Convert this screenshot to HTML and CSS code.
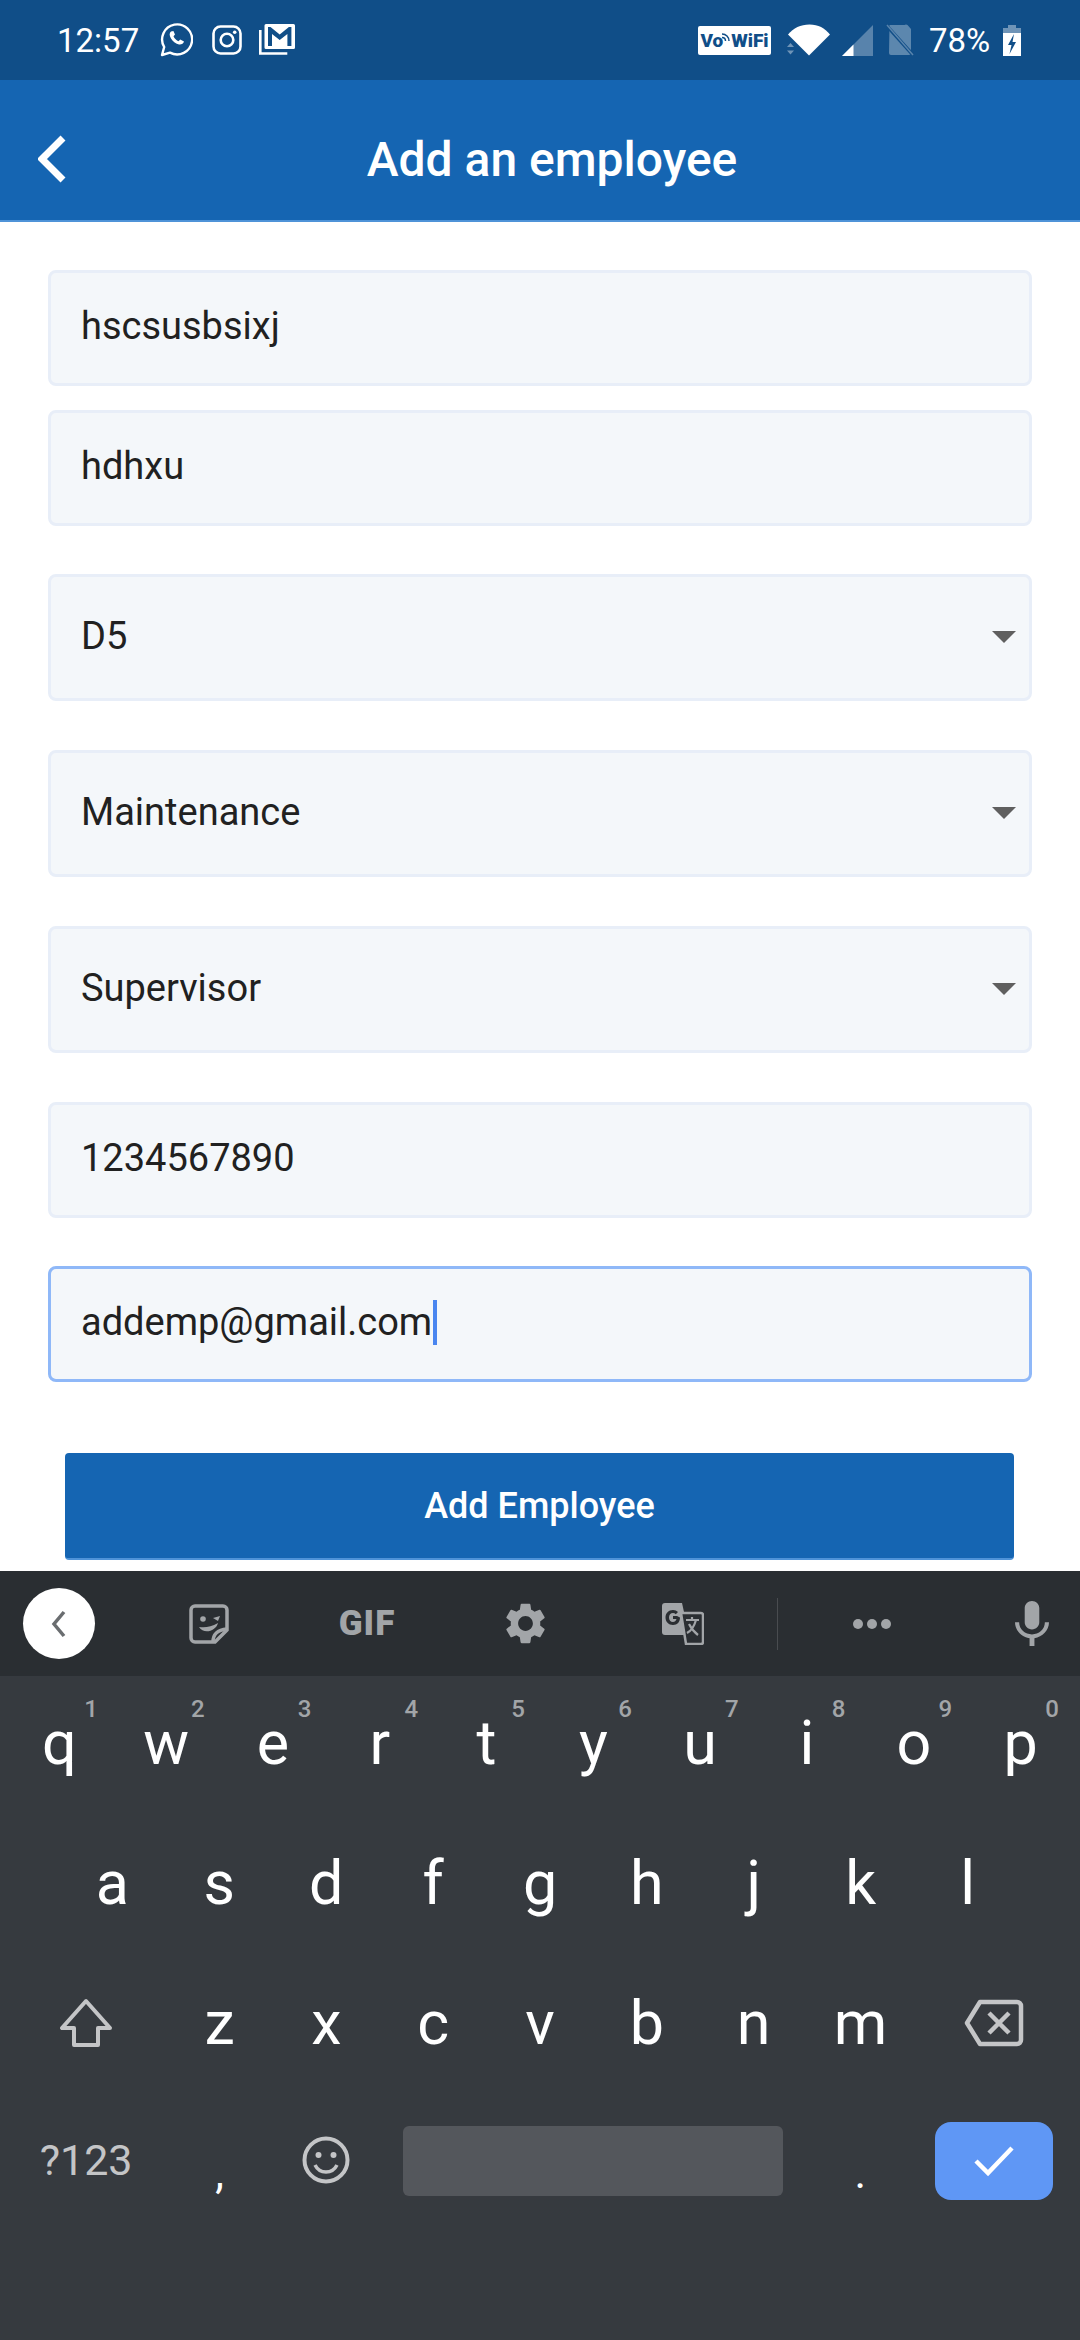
FILE: index.html
```html
<!DOCTYPE html>
<html>
<head>
    <meta charset="UTF-8">
    <title>Add an employee</title>
    <link rel="stylesheet" href="styles.css">
</head>
<body>
<div class="statusbar">
    <span class="time">12:57</span>
    <svg class="ic-wa" viewBox="0 0 33 35"><path d="M2 33l2.200-8A15 15 0 1 1 10 30.600z" fill="none" stroke="#fff" stroke-width="2.400" stroke-linejoin="round"/><path d="M11 9.500c-1.800 1.500-1.800 4 0 7 2 3.300 5 5.500 8 6 2.500.3 4.500-1 5-3l-3.800-2-1.700 1.700c-2-.7-4-2.700-5-5l1.500-1.700-1.600-3.500z" fill="#fff"/></svg>
    <svg class="ic-ig" viewBox="0 0 30 30"><rect x="1.500" y="1.500" width="27" height="27" rx="7" fill="none" stroke="#fff" stroke-width="2.600"/><circle cx="15" cy="15" r="6.300" fill="none" stroke="#fff" stroke-width="2.600"/><circle cx="22.700" cy="7.300" r="1.800" fill="#fff"/></svg>
    <svg class="ic-gm" viewBox="0 0 36 31"><path d="M1.300 6v23.500h27" fill="none" stroke="#fff" stroke-width="2.600"/><path d="M7 0h27.500a1.500 1.500 0 0 1 1.500 1.500v22a1.500 1.500 0 0 1-1.500 1.500H7a1.500 1.500 0 0 1-1.500-1.500v-22A1.500 1.500 0 0 1 7 0z" fill="#fff"/><path d="M9 3v19h4V10l7.700 6 7.700-6v12h4V3h-2.500l-9.200 7.500L11.500 3z" fill="#104e88"/></svg>
    <div class="status-right">
        <span class="vowifi">Vo<svg class="ic-arcs" viewBox="0 0 9 10"><path d="M0 3c4 0 7 3 7 7M0 6.500c2 0 3.500 1.500 3.500 3.500" fill="none" stroke="#104e88" stroke-width="1.500"/></svg>WiFi</span>
        <svg class="ic-wifi" viewBox="0 0 44 32"><path d="M1 10.500C6.500 4 13.500.5 22.500.5S37.500 4 43 10.500L22 31.500z" fill="#fff"/><path d="M0 23l3.500-4 3.500 4zM0 26.500l3.500 4 3.500-4z" fill="#fff" opacity=".4"/></svg>
        <svg class="ic-signal" viewBox="0 0 31 31"><path d="M31 0v31H0z" fill="#fff" opacity=".3"/><path d="M11.500 19.500V31H0z" fill="#fff"/></svg>
        <svg class="ic-sim" viewBox="0 0 28 32"><path d="M3.500 1h15a3 3 0 0 1 3 0l3.500 4v24a2 2 0 0 1-2 2H5a2 2 0 0 1-2-2z" fill="#fff" opacity=".32"/><path d="M0 1l27 30" stroke="#104e88" stroke-width="3.500"/><path d="M1 1l26 30" stroke="#fff" stroke-width="1.500" opacity=".3"/></svg>
        <span class="pct">78%</span>
        <svg class="ic-batt" viewBox="0 0 18 31"><path d="M5 0h8v3h5v28H0V3h5z" fill="#fff" opacity=".4"/><path d="M0 8h18v23H0z" fill="#fff"/><path d="M11 9l-6 11h3.500L6.500 29l6.500-12H9.500z" fill="#104e88"/></svg>
    </div>
</div>

<div class="header">
    <svg class="back" viewBox="0 0 28 48"><path d="M25 3L4 24l21 21" fill="none" stroke="#fff" stroke-width="7"/></svg>
    <div class="title">Add an employee</div>
</div>

<div class="form">
    <div class="field first"><span>hscsusbsixj</span></div>
    <div class="field tight"><span>hdhxu</span></div>
    <div class="field select gap48"><span>D5</span><b class="arrow"></b></div>
    <div class="field select"><span>Maintenance</span><b class="arrow"></b></div>
    <div class="field select"><span>Supervisor</span><b class="arrow"></b></div>
    <div class="field"><span>1234567890</span></div>
    <div class="field focus gap48"><span>addemp@gmail.com</span><i class="caret"></i></div>
    <div class="btn">Add Employee</div>
</div>

<div class="keyboard">
    <div class="toolbar">
        <div class="tb-back"><svg viewBox="0 0 16 28" width="16" height="28"><path d="M13 2L3 14l10 12" fill="none" stroke="#6a6d70" stroke-width="3.500"/></svg></div>
        <div class="tb-item">
            <svg class="ic-sticker" viewBox="0 0 40 40"><path d="M6 2h28a4 4 0 0 1 4 4v20L26 38H6a4 4 0 0 1-4-4V6a4 4 0 0 1 4-4z" fill="none" stroke="#a2a5a8" stroke-width="3.500"/><path d="M24 38c0-8 4-12 14-13" fill="none" stroke="#a2a5a8" stroke-width="3.500"/><circle cx="14" cy="15" r="2.800" fill="#a2a5a8"/><path d="M24 14l7-2-2 5z" fill="#a2a5a8"/><path d="M10 23c6 1 12 0 19-4-2 8-14 12-19 4z" fill="#a2a5a8"/></svg>
        </div>
        <div class="tb-item"><span class="gif">GIF</span></div>
        <div class="tb-item">
            <svg class="ic-gear" viewBox="2 2 20 20"><path fill="#a2a5a8" d="M19.140 12.940c.04-.3.06-.61.06-.94 0-.32-.02-.64-.07-.94l2.030-1.580c.18-.14.23-.41.12-.61l-1.920-3.320c-.12-.22-.37-.29-.59-.22l-2.390.96c-.5-.38-1.030-.7-1.620-.94l-.36-2.540c-.04-.24-.24-.41-.48-.41h-3.840c-.24 0-.43.17-.47.41l-.36 2.540c-.59.24-1.130.57-1.620.94l-2.390-.96c-.22-.08-.47 0-.59.22L2.740 8.870c-.12.21-.08.47.12.61l2.030 1.580c-.05.3-.09.63-.09.94s.02.64.07.94l-2.030 1.580c-.18.14-.23.41-.12.61l1.920 3.320c.12.22.37.29.59.22l2.390-.96c.5.38 1.030.7 1.620.94l.36 2.540c.05.24.24.41.48.41h3.840c.24 0 .44-.17.47-.41l.36-2.540c.59-.24 1.130-.56 1.620-.94l2.390.96c.22.08.47 0 .59-.22l1.920-3.320c.12-.22.07-.47-.12-.61l-2.010-1.580zM12 15.600c-1.980 0-3.600-1.620-3.600-3.600s1.620-3.600 3.600-3.600 3.600 1.620 3.600 3.600-1.620 3.600-3.600 3.600z"/></svg>
        </div>
        <div class="tb-item">
            <svg class="ic-translate" viewBox="0 0 42 42"><path d="M3 0h17l2 9v23H3a3 3 0 0 1-3-3V3a3 3 0 0 1 3-3z" fill="#a2a5a8"/><path d="M19 10h20a2 2 0 0 1 2 2v27a2 2 0 0 1-2 2H24l-5-31z" fill="#2a2e32" stroke="#a2a5a8" stroke-width="2.500"/><path d="M15 13h-4v3h3.500c-.5 2-2 3-3.500 3-2.500 0-4-2-4-4.500S8.500 10 11 10c1 0 2 .4 2.800 1.200l2.200-2.200C14.700 7.700 13 7 11 7c-4.500 0-7.500 3.300-7.500 7.500S6.500 22 11 22s7-3 7-7.500z" fill="#2a2e32"/><path d="M24 17h13M30 14v3M34 17c-2 7-5 11-9 13M27 21c2 4 5 8 9 11" fill="none" stroke="#a2a5a8" stroke-width="2.200"/></svg>
        </div>
        <div class="tb-sep"></div>
        <div class="tb-item"><span class="dots"><i></i><i></i><i></i></span></div>
        <div class="tb-item">
            <svg class="ic-mic" viewBox="5 2 14 19" preserveAspectRatio="none"><path fill="#a2a5a8" d="M12 14c1.660 0 3-1.340 3-3V5c0-1.660-1.340-3-3-3S9 3.340 9 5v6c0 1.660 1.340 3 3 3zm5.300-3c0 3-2.540 5.100-5.300 5.100S6.700 14 6.700 11H5c0 3.410 2.720 6.230 6 6.720V21h2v-3.280c3.280-.48 6-3.300 6-6.720h-1.700z"/></svg>
        </div>
    </div>

    <div class="kb-row">
        <div class="key">q<sup>1</sup></div><div class="key">w<sup>2</sup></div><div class="key">e<sup>3</sup></div><div class="key">r<sup>4</sup></div><div class="key">t<sup>5</sup></div><div class="key">y<sup>6</sup></div><div class="key">u<sup>7</sup></div><div class="key">i<sup>8</sup></div><div class="key">o<sup>9</sup></div><div class="key">p<sup>0</sup></div>
    </div>
    <div class="kb-row row-mid">
        <div class="key">a</div><div class="key">s</div><div class="key">d</div><div class="key">f</div><div class="key">g</div><div class="key">h</div><div class="key">j</div><div class="key">k</div><div class="key">l</div>
    </div>
    <div class="kb-row">
        <div class="key wide">
            <svg class="ic-shift" viewBox="0 0 54 50"><path d="M27 3L3 30h12v17h24V30h12z" fill="none" stroke="#c4c5c7" stroke-width="4" stroke-linejoin="round"/></svg>
        </div>
        <div class="key">z</div><div class="key">x</div><div class="key">c</div><div class="key">v</div><div class="key">b</div><div class="key">n</div><div class="key">m</div>
        <div class="key wide">
            <svg class="ic-del" viewBox="0 0 60 48"><path d="M16 3h37a4 4 0 0 1 4 4v34a4 4 0 0 1-4 4H16L3 24z" fill="none" stroke="#c4c5c7" stroke-width="4.500" stroke-linejoin="round"/><path d="M25 14l20 20M45 14L25 34" fill="none" stroke="#c4c5c7" stroke-width="4.500"/></svg>
        </div>
    </div>
    <div class="kb-row row-last">
        <div class="key wide sym">?123</div>
        <div class="key punct">,</div>
        <div class="key">
            <svg class="ic-emoji" viewBox="0 0 48 48"><circle cx="24" cy="24" r="21.500" fill="none" stroke="#c4c5c7" stroke-width="4"/><circle cx="16.500" cy="19" r="3" fill="#c4c5c7"/><circle cx="31.500" cy="19" r="3" fill="#c4c5c7"/><path d="M13 29c2.500 5 6.500 7 11 7s8.500-2 11-7" fill="none" stroke="#c4c5c7" stroke-width="3.500"/></svg>
        </div>
        <div class="key space"><div class="space-bar"></div></div>
        <div class="key punct">.</div>
        <div class="key wide">
            <div class="enter"><svg class="ic-check" viewBox="0 0 42 32"><path d="M3 16l12 12L39 3" fill="none" stroke="#fff" stroke-width="4.500"/></svg></div>
        </div>
    </div>
</div>
</body>
</html>
```

FILE: styles.css
```css
*{box-sizing:border-box;}
html,body{margin:0;padding:0;}
body{width:1080px;height:2340px;overflow:hidden;background:#fff;font-family:Roboto,"Liberation Sans",sans-serif;display:flex;flex-direction:column;}
svg{display:block;flex-shrink:0;}

.statusbar{height:80px;background:#104e88;color:#fff;display:flex;align-items:center;padding:0 0 0 57px;flex-shrink:0;}
.time{font-size:33px;width:103px;}
.ic-wa{width:33px;height:35px;margin-top:-1px;}
.ic-ig{width:30px;height:30px;margin-left:19px;}
.ic-gm{width:36px;height:31px;margin-left:17px;margin-top:-1px;}
.status-right{margin-left:auto;display:flex;align-items:center;}
.vowifi{width:73px;height:29px;background:#fff;border-radius:2px;color:#104e88;font-size:19px;font-weight:900;display:flex;align-items:center;justify-content:center;}
.ic-arcs{width:9px;height:10px;margin:-8px 0 0 -1px;}
.ic-wifi{width:44px;height:32px;margin-left:16px;}
.ic-signal{width:31px;height:31px;margin-left:11px;}
.ic-sim{width:28px;height:32px;margin-left:13px;}
.pct{font-size:33px;margin-left:15px;width:66px;}
.ic-batt{width:18px;height:31px;margin-left:8px;margin-right:59px;}

.header{height:142px;background:#1565b2;border-bottom:2px solid #4f93d8;display:flex;align-items:center;padding:18px 42px 0 38px;flex-shrink:0;}
.back{width:28px;height:48px;}
.title{flex:1;text-align:center;color:#fff;font-size:48px;font-weight:500;}

.form{flex:1;padding:48px 48px 0;display:flex;flex-direction:column;}
.field{height:116px;flex-shrink:0;margin-top:49px;background:#f4f7fa;border:3px solid #e8eef8;border-radius:8px;display:flex;align-items:center;padding:0 13px 0 30px;font-size:38px;color:#212121;}
.field span{margin-top:-4px;}
.field.first{margin-top:0;}
.field.tight{margin-top:24px;}
.field.gap48{margin-top:48px;}
.field.select{height:127px;}
.field.focus{border-color:#8fb8f8;}
.arrow{margin-left:auto;margin-top:-1px;width:0;height:0;border-left:12px solid transparent;border-right:12px solid transparent;border-top:12px solid #5f5f5f;}
.caret{width:4px;height:45px;background:#4a86f0;margin-left:1px;margin-top:-4px;}
.btn{height:107px;flex-shrink:0;margin:71px 18px 0 17px;background:#1565b2;border-bottom:2px solid #4f93d8;border-radius:4px;color:#fff;font-size:36px;font-weight:500;display:flex;align-items:center;justify-content:center;}

.keyboard{height:769px;flex-shrink:0;background:#363a3f;}
.toolbar{height:105px;background:#2a2e32;display:flex;align-items:center;overflow:hidden;padding-left:23px;}
.tb-back{width:72px;height:71px;border-radius:50%;background:#fff;margin-right:35px;flex-shrink:0;display:flex;align-items:center;justify-content:center;}
.tb-item{width:158px;flex-shrink:0;display:flex;justify-content:center;align-items:center;}
.tb-sep{width:1px;height:52px;background:#494c50;margin:0 15px;flex-shrink:0;}
.ic-sticker{width:40px;height:40px;}
.gif{font-size:35px;font-weight:900;color:#a2a5a8;letter-spacing:1px;}
.ic-gear{width:41px;height:41px;}
.ic-translate{width:42px;height:42px;}
.dots{display:flex;gap:4px;}
.dots i{width:10px;height:10px;border-radius:50%;background:#a2a5a8;}
.ic-mic{width:34px;height:45px;margin-left:4px;}

.kb-row{height:140px;display:flex;padding:0 6px;}
.kb-row.row-mid{padding:0 59px;}
.row-last{margin-top:-3px;}
.key{flex:1 1 0;position:relative;color:#fff;font-size:61px;display:flex;align-items:center;justify-content:center;padding-bottom:6px;}
.key.wide{flex-grow:1.5;}
.key.space{flex-grow:4;}
.key sup{position:absolute;top:21px;right:15px;font-size:24px;font-weight:500;color:#a2a5a8;line-height:1;}
.key.sym{font-size:43px;color:#c4c5c7;}
.key.punct{font-size:44px;padding:20px 0 0;}
.ic-shift{width:54px;height:50px;}
.ic-del{width:60px;height:48px;}
.ic-emoji{width:48px;height:48px;}
.space-bar{width:380px;height:70px;background:#54575c;border-radius:6px;margin-top:2px;}
.enter{width:118px;height:78px;background:#5f97f5;border-radius:16px;display:flex;align-items:center;justify-content:center;margin-top:1px;}
.ic-check{width:42px;height:32px;}
```
